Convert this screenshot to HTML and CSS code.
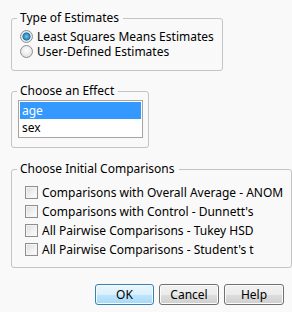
FILE: index.html
```html
<!DOCTYPE html>
<html lang="en">
<head>
    <meta charset="UTF-8">
    <meta name="viewport" content="width=device-width, initial-scale=1.0">
    <title>Compare Means</title>
    <link rel="stylesheet" href="styles.css">
</head>
<body>

<fieldset class="group group-type">
    <legend>Type of Estimates</legend>
    <label class="opt"><input type="radio" name="est" checked> Least Squares Means Estimates</label>
    <label class="opt"><input type="radio" name="est"> User-Defined Estimates</label>
</fieldset>

<fieldset class="group group-effect">
    <legend>Choose an Effect</legend>
    <ul class="listbox">
        <li class="selected">age</li>
        <li>sex</li>
    </ul>
</fieldset>

<fieldset class="group group-comp">
    <legend>Choose Initial Comparisons</legend>
    <label class="opt check"><input type="checkbox"> Comparisons with Overall Average - ANOM</label>
    <label class="opt check"><input type="checkbox"> Comparisons with Control - Dunnett's</label>
    <label class="opt check"><input type="checkbox"> All Pairwise Comparisons - Tukey HSD</label>
    <label class="opt check"><input type="checkbox"> All Pairwise Comparisons - Student's t</label>
</fieldset>

<div class="buttons">
    <button class="btn default">OK</button>
    <button class="btn">Cancel</button>
    <button class="btn">Help</button>
</div>

</body>
</html>
```

FILE: styles.css
```css
html, body {
    background-color: #f9f9f9;
}
body {
    margin: 0;
    padding: 11px 8px 0 11px;
    font-family: "Noto Sans", "Open Sans", sans-serif;
    font-size: 12px;
    color: #000;
}
.group {
    margin: 0;
    border: 1px solid #c4c4c4;
    border-radius: 3px;
    box-sizing: border-box;
}
.group legend {
    padding: 0 4px 0 3px;
    margin-left: 3px;
    line-height: 14px;
}
.group-type {
    width: 196px;
    padding: 4px 8px 11px 2px;
}
.group-effect {
    width: 138px;
    margin-top: 13px;
    padding: 2px 5px 9px 2px;
}
.group-comp {
    width: 276px;
    margin-top: 14px;
    padding: 7px 8px 8px 2px;
}
.opt {
    display: flex;
    align-items: center;
    height: 15px;
    line-height: 15px;
    margin-left: 6px;
    white-space: nowrap;
}
.opt input {
    appearance: none;
    -webkit-appearance: none;
    margin: 0 4px 0 0;
    flex: none;
}
input[type="radio"] {
    width: 13px;
    height: 13px;
    border-radius: 50%;
    border: 1px solid #8f8f8f;
    box-sizing: border-box;
    background: radial-gradient(circle at 50% 40%, #ffffff 0%, #e4e4e4 70%, #cfcfcf 100%);
}
input[type="radio"]:checked {
    background: radial-gradient(circle at 50% 50%, #7cc0e6 0%, #2a8ac6 38%, #1b6ea4 48%, #e6e6e6 56%, #f4f4f4 100%);
}
.check {
    height: 19px;
    line-height: 19px;
    margin-left: 11px;
}
.check input {
    width: 13px;
    height: 13px;
    margin-right: 4px;
    border: 1px solid #8f8f8f;
    box-sizing: border-box;
    background: linear-gradient(135deg, #dcdcdc 0%, #f2f2f2 60%, #fdfdfd 100%);
    box-shadow: inset 0 0 0 1px #f4f4f4;
}
.listbox {
    list-style: none;
    margin: 0 0 0 4px;
    padding: 1px;
    width: 125px;
    height: 38px;
    box-sizing: border-box;
    border: 1px solid #a5a5a5;
    background: #fff;
}
.listbox li {
    height: 17px;
    line-height: 17px;
    padding-left: 2px;
}
.listbox li.selected {
    background: #3399ff;
    color: #fff;
}
.buttons {
    display: flex;
    justify-content: flex-end;
    gap: 5px;
    margin-top: 16px;
}
.btn {
    width: 60px;
    height: 21px;
    padding: 0;
    border: 1px solid #707070;
    border-radius: 3px;
    font-family: inherit;
    font-size: 12px;
    color: #000;
    background: linear-gradient(to bottom, #f2f2f2 0%, #ebebeb 50%, #dddddd 51%, #cfcfcf 100%);
    box-shadow: inset 0 0 0 1px #fbfbfb;
}
.btn.default {
    width: 59px;
    border-color: #3c7fb1;
    background: linear-gradient(to bottom, #eaf6fd 0%, #d9f0fc 50%, #bee6fd 51%, #a7d9f5 100%);
    box-shadow: inset 0 0 0 1px #f1fafe;
}
```
